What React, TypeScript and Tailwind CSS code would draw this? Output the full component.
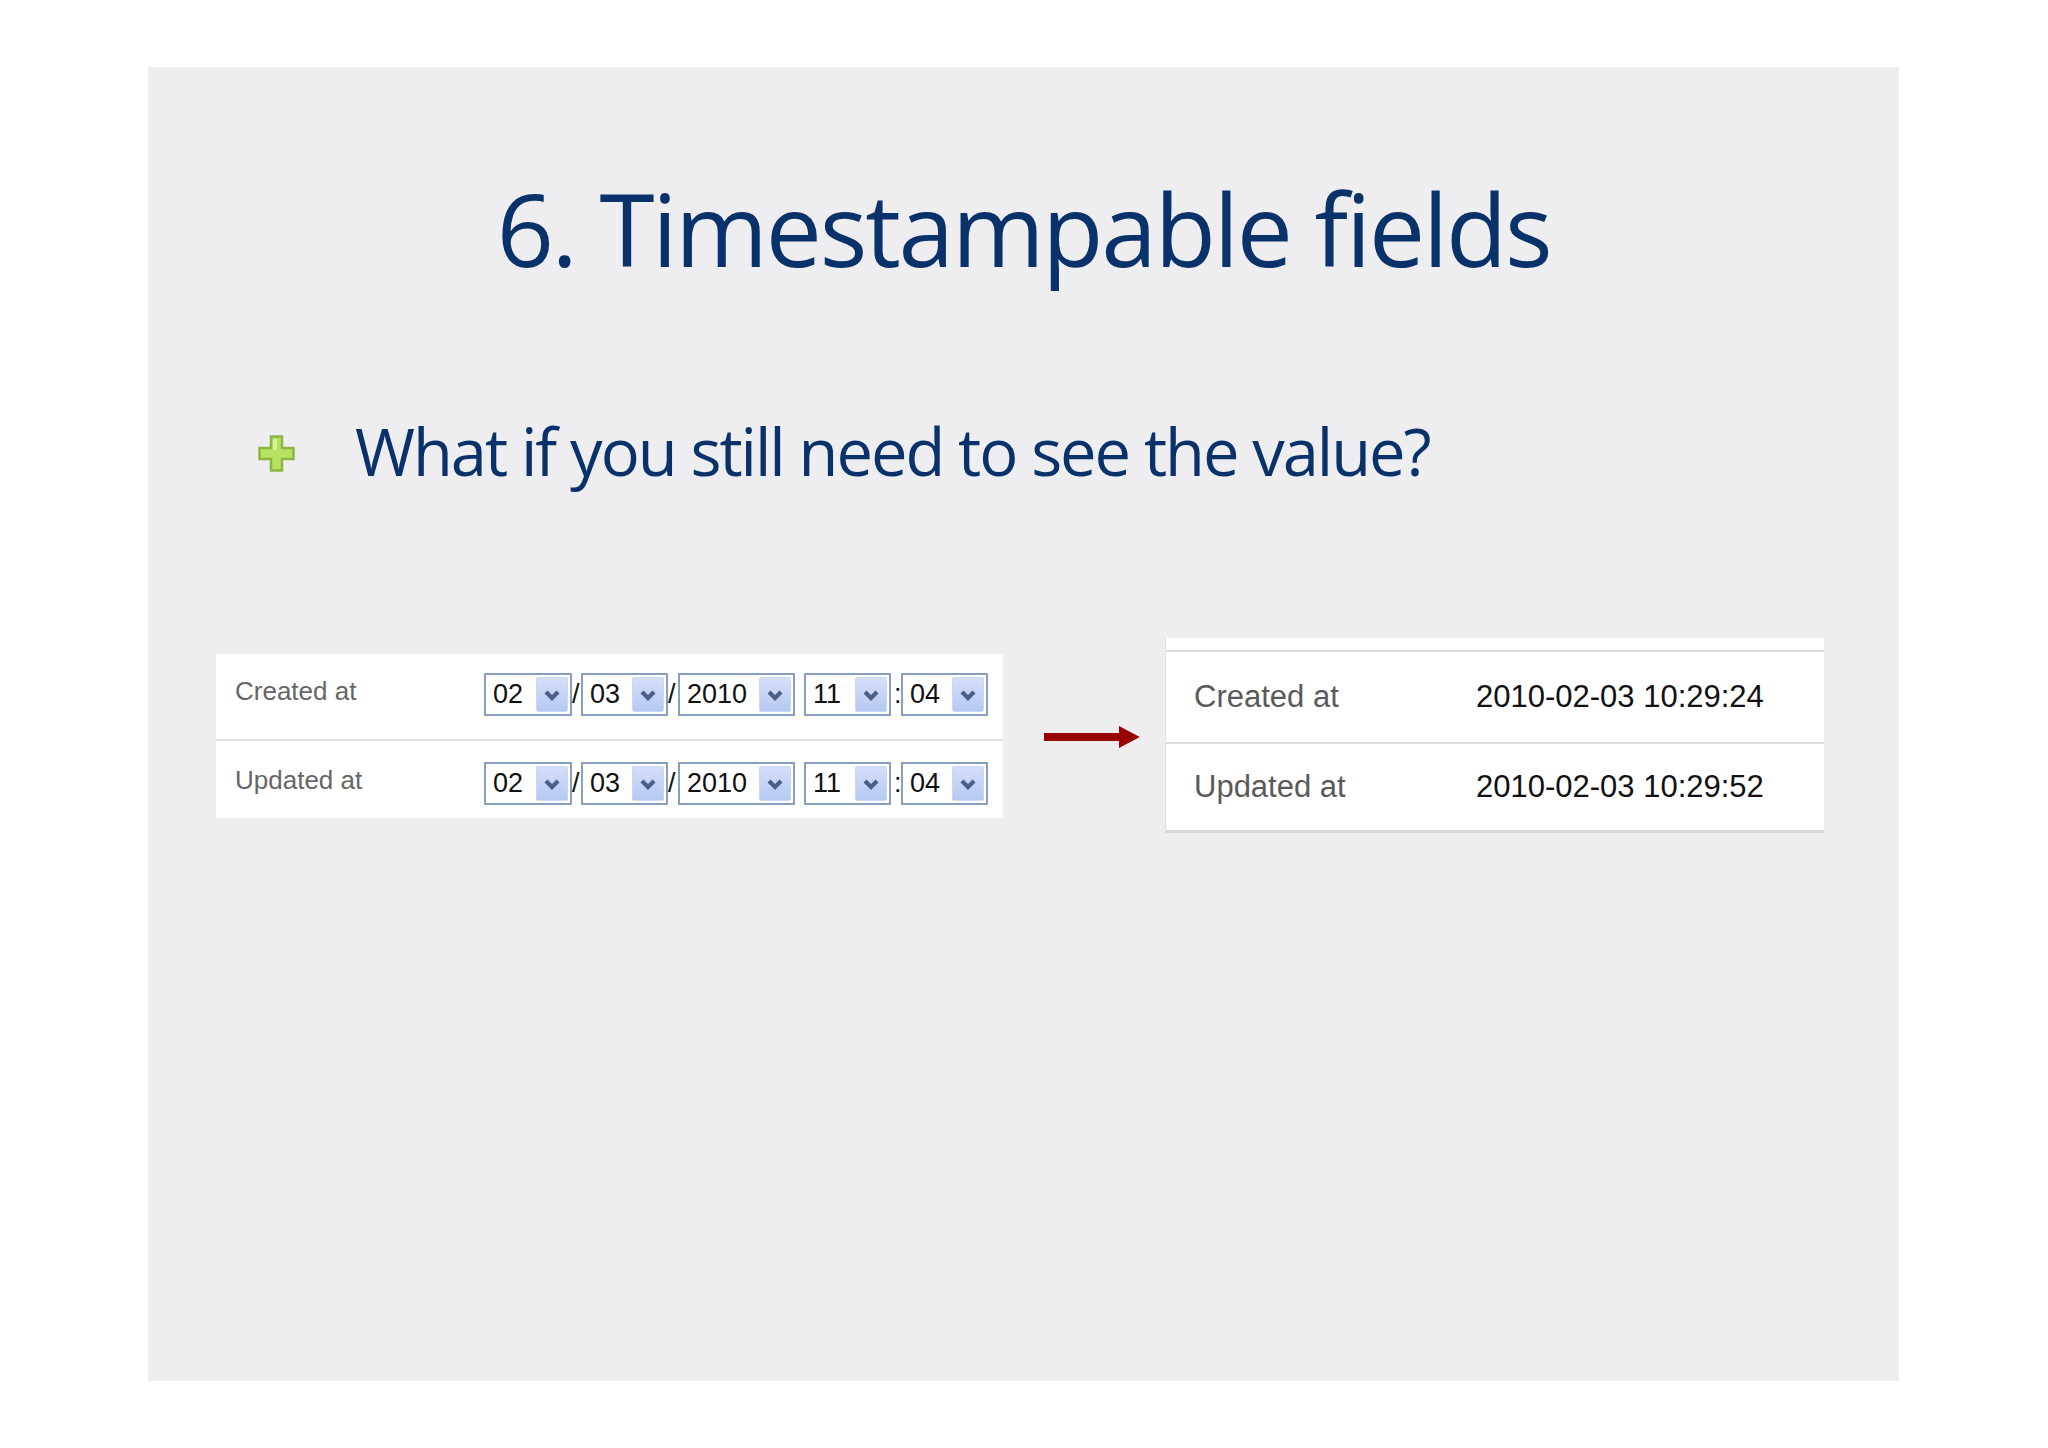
import React from 'react'

const sans = { fontFamily: '"Liberation Sans", Arial, sans-serif' }

function Chevron() {
  return (
    <svg width="18" height="12" viewBox="0 0 18 12" aria-hidden="true">
      <polyline points="3,3 9,9 15,3" fill="none" stroke="#4b5f86" strokeWidth="4.2" strokeLinejoin="miter" />
    </svg>
  )
}

function Select({ value, width }: { value: string; width: string }) {
  return (
    <div className={`flex h-[43px] items-center justify-between border-2 border-[#87a0c0] bg-white pl-[7px] pr-[2px] ${width}`}>
      <span className="text-[27px] leading-none text-[#111]">{value}</span>
      <span className="flex h-[35px] w-[32px] items-center justify-center rounded-[2px] border border-[#c9d7f7] bg-gradient-to-b from-[#d3def9] to-[#b7c9f2]">
        <Chevron />
      </span>
    </div>
  )
}

function Sep({ ch, width }: { ch: string; width: string }) {
  return <span className={`flex h-[43px] items-center text-[27px] leading-none text-[#111] ${width}`}>{ch}</span>
}

function DateTimeRow({ label, pt, h }: { label: string; pt: string; h: string }) {
  return (
    <div className={`flex items-start ${pt} ${h}`}>
      <div className="flex h-[43px] w-[268px] items-center pb-[6px] pl-[19px] text-[26px] text-[#666]">{label}</div>
      <Select value="02" width="w-[88px]" />
      <Sep ch="/" width="w-[9px]" />
      <Select value="03" width="w-[87px]" />
      <Sep ch="/" width="w-[10px]" />
      <Select value="2010" width="w-[117px]" />
      <span className="w-[9px]" />
      <Select value="11" width="w-[87px]" />
      <Sep ch=":" width="w-[10px] pl-[3px]" />
      <Select value="04" width="w-[87px]" />
    </div>
  )
}

function PlusBullet() {
  return (
    <svg width="37" height="37" viewBox="0 0 37 37" aria-hidden="true">
      <path
        d="M13 1.5h11v11.5h11.5v11h-11.5v11.5h-11v-11.5h-11.5v-11h11.5z"
        fill="#b6e163"
        stroke="#8db640"
        strokeWidth="2.5"
      />
      <path d="M15 4h4v11h-4z" fill="#d6f29a" />
    </svg>
  )
}

export default function App() {
  return (
    <div className="h-[1448px] w-[2048px] bg-white pl-[148px] pt-[67px]" style={sans}>
      <div className="flex h-[1314px] w-[1751px] flex-col bg-[#eeeef0]">
        <h1
          className="mt-[111px] text-center text-[100px] leading-none tracking-[-0.022em] text-[#0a326a]"
          style={{ fontFamily: '"Open Sans", "Noto Sans", sans-serif' }}
        >
          6. Timestampable fields
        </h1>

        <div className="mt-[141px] flex items-center pl-[110px]">
          <span className="mt-1 flex">
            <PlusBullet />
          </span>
          <p
            className="ml-[60px] text-[65px] leading-none tracking-[-0.031em] text-[#0a326a]"
            style={{ fontFamily: '"Open Sans", "Noto Sans", sans-serif' }}
          >
            What if you still need to see the value?
          </p>
        </div>

        <div className="mt-[154px] flex items-start pl-[68px]">
          {/* form with select boxes */}
          <div className="mt-[16px] w-[787px] bg-white">
            <DateTimeRow label="Created at" pt="pt-[19px]" h="h-[85px]" />
            <div className="h-[2px] bg-[#e2e2e4]" />
            <DateTimeRow label="Updated at" pt="pt-[21px]" h="h-[77px]" />
          </div>

          {/* arrow */}
          <div className="ml-[41px] mt-[88px] flex w-[96px] items-center">
            <div className="h-[8px] w-[76px] bg-[#990000]" />
            <svg width="21" height="22" viewBox="0 0 21 22" aria-hidden="true">
              <polygon points="0,0 21,11 0,22" fill="#990000" />
            </svg>
          </div>

          {/* read-only table */}
          <div className="ml-[25px] w-[659px] border-l border-[#e2e2e4] bg-white">
            <div className="h-[12px]" />
            <div className="h-[2px] bg-[#dcdcde]" />
            <div className="flex h-[90px] items-center text-[31px]">
              <span className="w-[310px] pl-[28px] text-[#5a5a5a]">Created at</span>
              <span className="text-[#111]">2010-02-03 10:29:24</span>
            </div>
            <div className="h-[2px] bg-[#dcdcde]" />
            <div className="flex h-[86px] items-center text-[31px]">
              <span className="w-[310px] pl-[28px] text-[#5a5a5a]">Updated at</span>
              <span className="text-[#111]">2010-02-03 10:29:52</span>
            </div>
            <div className="h-[3px] bg-[#d8d8da]" />
          </div>
        </div>
      </div>
    </div>
  )
}
